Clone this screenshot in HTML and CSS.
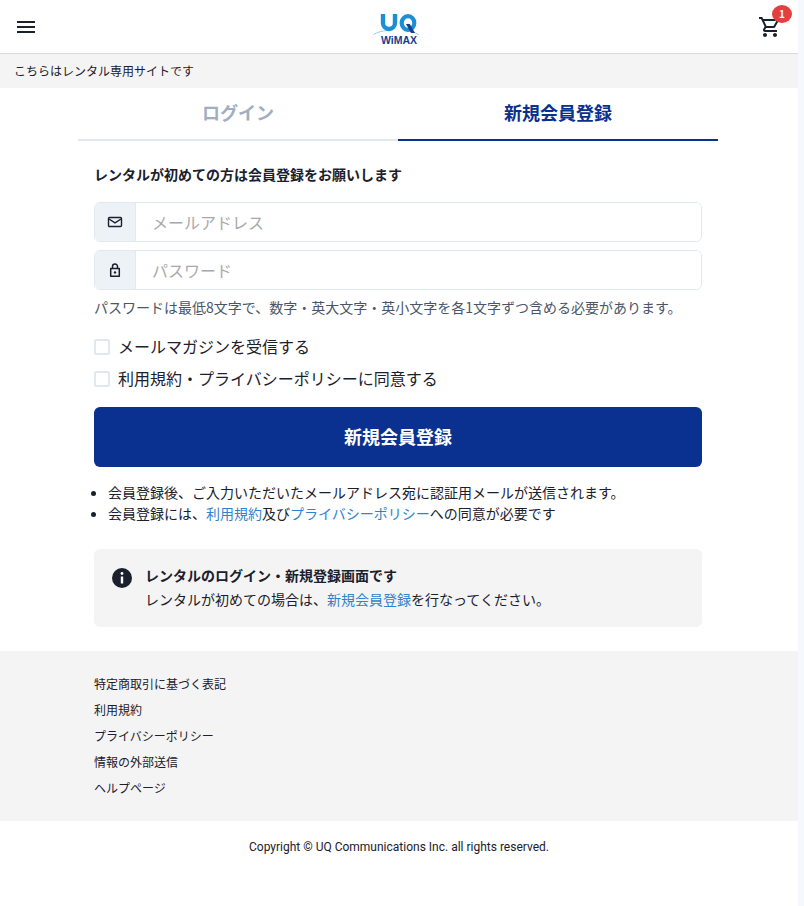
FILE: index.html
```html
<!DOCTYPE html>
<html lang="ja">
<head>
    <meta charset="UTF-8">
    <title>新規会員登録</title>
    <link rel="stylesheet" href="styles.css">
</head>
<body>
    <div class="page">
        <!-- Header -->
        <header class="header">
            <svg class="menu-icon" viewBox="0 0 18 12" width="18" height="12"><path d="M0 0h18v2H0zM0 5h18v2H0zM0 10h18v2H0z" fill="#1a202c"/></svg>
            <div class="logo">
                <svg viewBox="0 0 46 23" width="46" height="23">
                    <path d="M0.500 22.500C5 20 9 19 14 18.500M32 18.500c5 .3 9 1.500 13.500 4" fill="none" stroke="#8cc8ec" stroke-width="0.900"/>
                    <path d="M10 2v9a6 6 0 0 0 12 0V2" fill="none" stroke="#1a8fd6" stroke-width="4.400"/>
                    <ellipse cx="35" cy="11" rx="6.300" ry="6.800" fill="none" stroke="#1a8fd6" stroke-width="4.200"/>
                    <path d="M33 12h3.800l5.200 9h-4z" fill="#14408f"/>
                </svg>
                <span class="logo-text">WiMAX</span>
            </div>
            <div class="cart">
                <svg viewBox="0 0 24 24" width="24" height="24"><path d="M15.550 13c.750 0 1.410-.410 1.750-1.030l3.580-6.490A.996.996 0 0 0 20.010 4H5.210l-.940-2H1v2h2l3.600 7.590-1.350 2.440C4.520 15.370 5.480 17 7 17h12v-2H7l1.100-2h7.450zM6.160 6h12.150l-2.760 5H8.530L6.160 6zM7 18c-1.100 0-1.990.900-1.990 2S5.900 22 7 22s2-.900 2-2-.900-2-2-2zm10 0c-1.100 0-1.990.900-1.990 2s.890 2 1.990 2 2-.900 2-2-.900-2-2-2z" fill="#1a202c"/></svg>
                <span class="cart-badge">1</span>
            </div>
        </header>
        <div class="notice-bar">こちらはレンタル専用サイトです</div>

        <!-- Tabs -->
        <div class="tabs">
            <div class="tab">ログイン</div>
            <div class="tab tab-active">新規会員登録</div>
        </div>

        <!-- Form -->
        <main class="form">
            <p class="lead">レンタルが初めての方は会員登録をお願いします</p>
            <div class="field">
                <span class="field-addon">
                    <svg viewBox="0 0 16 16" width="16" height="16"><path d="M2.500 3.500h11a1 1 0 0 1 1 1v7a1 1 0 0 1-1 1h-11a1 1 0 0 1-1-1v-7a1 1 0 0 1 1-1z" fill="none" stroke="#1a202c" stroke-width="1.400"/><path d="M2 5l6 3.800L14 5" fill="none" stroke="#1a202c" stroke-width="1.400"/></svg>
                </span>
                <input class="field-input" type="text" placeholder="メールアドレス">
            </div>
            <div class="field">
                <span class="field-addon">
                    <svg viewBox="0 0 16 16" width="16" height="16"><path d="M3.700 6.500h8.600v7.800H3.700z" fill="none" stroke="#1a202c" stroke-width="1.500" stroke-linejoin="round"/><path d="M5.500 6.500V4.500a2.500 2.500 0 0 1 5 0v2" fill="none" stroke="#1a202c" stroke-width="1.500"/><circle cx="8" cy="10.400" r="1.200" fill="#1a202c"/></svg>
                </span>
                <input class="field-input" type="password" placeholder="パスワード">
            </div>
            <p class="hint">パスワードは最低8文字で、数字・英大文字・英小文字を各1文字ずつ含める必要があります。</p>
            <label class="check"><input type="checkbox"><span class="check-box"></span><span class="check-text">メールマガジンを受信する</span></label>
            <label class="check"><input type="checkbox"><span class="check-box"></span><span class="check-text">利用規約・プライバシーポリシーに同意する</span></label>
            <button class="submit">新規会員登録</button>
            <ul class="notes">
                <li>会員登録後、ご入力いただいたメールアドレス宛に認証用メールが送信されます。</li>
                <li>会員登録には、<a href="#">利用規約</a>及び<a href="#">プライバシーポリシー</a>への同意が必要です</li>
            </ul>
            <div class="info">
                <svg class="info-icon" viewBox="0 0 20 20" width="20" height="20"><circle cx="10" cy="10" r="10" fill="#1a202c"/><circle cx="10" cy="5.500" r="1.400" fill="#fff"/><path d="M8.800 8.500h2.400v7H8.800z" fill="#fff"/></svg>
                <div>
                    <p class="info-title">レンタルのログイン・新規登録画面です</p>
                    <p class="info-text">レンタルが初めての場合は、<a href="#">新規会員登録</a>を行なってください。</p>
                </div>
            </div>
        </main>

        <!-- Footer -->
        <footer class="footer">
            <ul class="footer-links">
                <li>特定商取引に基づく表記</li>
                <li>利用規約</li>
                <li>プライバシーポリシー</li>
                <li>情報の外部送信</li>
                <li>ヘルプページ</li>
            </ul>
        </footer>
        <p class="copyright">Copyright © UQ Communications Inc. all rights reserved.</p>
    </div>
</body>
</html>
```

FILE: styles.css
```css
* {
    box-sizing: border-box;
}

html, body {
    margin: 0;
    padding: 0;
}

body {
    font-family: "Noto Sans CJK JP", "Noto Sans", sans-serif;
    color: #1a202c;
    background-color: #f5f9fd;
    height: 906px;
    overflow: hidden;
}

p {
    margin: 0;
}

a {
    color: #3182ce;
    text-decoration: none;
}

.page {
    width: 798px;
    height: 906px;
    background-color: #fff;
}

.header {
    height: 54px;
    display: flex;
    align-items: center;
    justify-content: space-between;
    padding: 0 16px 0 17px;
    border-bottom: 1px solid #d9d9d9;
}

.logo {
    width: 46px;
    height: 44px;
    margin-left: -1px;
    display: flex;
    flex-direction: column;
    align-items: center;
}

.logo svg {
    margin-top: 7px;
    flex: none;
}

.logo-text {
    margin-top: 0;
    padding-left: 6px;
    font-family: "Liberation Sans", sans-serif;
    font-size: 10.500px;
    font-weight: 700;
    line-height: 10px;
    color: #14408f;
}

.cart {
    position: relative;
    width: 24px;
    height: 24px;
}

.cart-badge {
    position: absolute;
    top: -10px;
    left: 14px;
    width: 20px;
    height: 18px;
    border-radius: 50%;
    background-color: #e53e3e;
    color: #fff;
    font-size: 10px;
    font-weight: 700;
    line-height: 18px;
    text-align: center;
}

.notice-bar {
    height: 34px;
    padding-left: 14px;
    background-color: #f4f4f4;
    font-size: 12px;
    line-height: 34px;
}

.tabs {
    width: 640px;
    margin-left: 78px;
    display: flex;
}

.tab {
    flex: 1;
    height: 53px;
    border-bottom: 2px solid #e2e8f0;
    color: #a0aec0;
    font-size: 18px;
    font-weight: 700;
    line-height: 49px;
    text-align: center;
}

.tab-active {
    color: #0a318f;
    border-bottom-color: #0a318f;
}

.form {
    width: 608px;
    margin-left: 94px;
    padding-top: 22px;
}

.lead {
    font-size: 14px;
    font-weight: 700;
    line-height: 22px;
    margin-bottom: 17px;
}

.field {
    height: 40px;
    display: flex;
    margin-bottom: 8px;
    border: 1px solid #e2e8f0;
    border-radius: 6px;
    overflow: hidden;
}

.field-addon {
    width: 41px;
    display: flex;
    align-items: center;
    justify-content: center;
    background-color: #edf2f7;
    border-right: 1px solid #e2e8f0;
}

.field-input {
    flex: 1;
    min-width: 0;
    border: none;
    outline: none;
    padding: 0 16px;
    font-family: inherit;
    font-size: 16px;
    color: #1a202c;
}

.field-input::placeholder {
    color: #a9a9a9;
}

.hint {
    font-size: 14px;
    line-height: 20px;
    color: #4a5568;
    margin-top: -1px;
    margin-bottom: 18px;
}

.check {
    display: flex;
    align-items: center;
    height: 24px;
    margin-bottom: 8px;
    font-size: 16px;
}

.check input {
    display: none;
}

.check-box {
    width: 16px;
    height: 16px;
    margin-right: 8px;
    border: 2px solid #e2e8f0;
    border-radius: 2px;
    background-color: #fff;
}

.check-text {
    padding-bottom: 2px;
}

.submit {
    display: block;
    width: 100%;
    height: 60px;
    margin-top: 16px;
    padding-bottom: 3px;
    border: none;
    border-radius: 6px;
    background-color: #0a318f;
    color: #fff;
    font-family: inherit;
    font-size: 18px;
    font-weight: 700;
}

.notes {
    margin: 15px 0 0;
    padding-left: 14px;
    font-size: 14px;
    line-height: 21px;
}

.info {
    display: flex;
    margin-top: 25px;
    padding: 15px 18px 16px;
    border-radius: 6px;
    background-color: #f4f4f4;
    font-size: 14px;
}

.info-icon {
    flex: none;
    margin: 4px 14px 0 0;
}

.info-title {
    font-weight: 700;
    line-height: 23px;
    margin-left: -1px;
}

.info-text {
    line-height: 24px;
    margin-left: -1px;
}

.footer {
    margin-top: 24px;
    height: 170px;
    padding: 20px 0 0 94px;
    background-color: #f4f4f4;
}

.footer-links {
    list-style: none;
    margin: 0;
    padding: 0;
    font-size: 12px;
    line-height: 26px;
}

.copyright {
    margin-top: 17px;
    font-family: Roboto, sans-serif;
    font-size: 12px;
    line-height: 18px;
    text-align: center;
}
```
